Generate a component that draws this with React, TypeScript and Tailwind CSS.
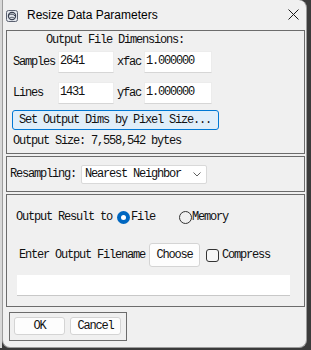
import React from "react";

const mono = "font-['Liberation_Mono',monospace] text-[12px] leading-[14px] tracking-[-1.2px] text-[#111111] whitespace-nowrap";

function Entry({ w, value }: { w: string; value?: string }) {
  return (
    <div className={`${w} h-[22px] bg-white border border-[#ececec] border-b-[#d6d6d6] pl-[1px] pt-[2px] ${mono}`}>
      {value}
    </div>
  );
}

export default function App() {
  return (
    <div className="w-[311px] h-[350px] bg-[#3b3b3b] flex overflow-hidden">
      <div className="w-[2px] h-[348px] bg-[#d8d8d8] shrink-0" />
      <div className="w-[305px] h-[348px] shrink-0 bg-[#f0f0f0] border border-t-0 border-[#9c9c9c] rounded-tr-[8px] rounded-b-[8px] flex flex-col">
        {/* title bar */}
        <div className="h-[30px] flex items-center shrink-0 relative">
          <svg className="ml-[3px] mt-[2px]" width="12" height="12" viewBox="0 0 12 12">
            <rect x="0.5" y="0.5" width="11" height="11" rx="2" fill="#e4e8ee" stroke="#5a6070" />
            <circle cx="6" cy="6" r="3.6" fill="none" stroke="#3a4150" strokeWidth="1.2" />
            <path d="M3 5 C5 3.5 7.5 4 9 6" fill="none" stroke="#3a4150" strokeWidth="1" />
            <path d="M3.5 8 C5 7 7 7 8.5 8" fill="none" stroke="#3a4150" strokeWidth="0.8" />
          </svg>
          <span className="ml-[9px] font-['Liberation_Sans',sans-serif] text-[12px] text-black">Resize Data Parameters</span>
          <svg className="absolute left-[285px] top-[9px]" width="11" height="11" viewBox="0 0 11 11">
            <path d="M0.5 0.5 L10.5 10.5 M10.5 0.5 L0.5 10.5" stroke="#1a1a1a" strokeWidth="1" />
          </svg>
        </div>

        {/* Frame 1 */}
        <div className="ml-[3px] w-[299px] h-[124px] border border-[#6c6c6c] flex flex-col shrink-0">
          <div className={`mt-[2px] pl-[39px] ${mono}`}>Output File Dimensions:</div>
          <div className="mt-[4px] h-[22px] pl-[6px] flex items-center">
            <div className={`w-[45px] ${mono}`}>Samples</div>
            <Entry w="w-[56px]" value="2641" />
            <div className={`ml-[3px] w-[27px] ${mono}`}>xfac</div>
            <Entry w="w-[68px]" value="1.000000" />
          </div>
          <div className="mt-[9px] h-[22px] pl-[6px] flex items-center">
            <div className={`w-[45px] ${mono}`}>Lines</div>
            <Entry w="w-[56px]" value="1431" />
            <div className={`ml-[3px] w-[27px] ${mono}`}>yfac</div>
            <Entry w="w-[68px]" value="1.000000" />
          </div>
          <div className={`mt-[6px] ml-[5px] w-[207px] h-[20px] bg-[#e0eef9] border border-[#0078d4] rounded-[3px] pl-[6px] flex items-center ${mono}`}>
            Set Output Dims by Pixel Size...
          </div>
          <div className={`mt-[4px] pl-[6px] ${mono}`}>Output Size: 7,558,542 bytes</div>
        </div>

        {/* Frame 2 */}
        <div className="mt-[2px] ml-[3px] w-[299px] h-[36px] border border-[#6c6c6c] flex items-center pl-[3px] shrink-0">
          <div className={`w-[71px] ${mono}`}>Resampling:</div>
          <div className={`w-[126px] h-[19px] bg-white border border-[#d9d9d9] rounded-[2px] pl-[3px] flex items-center ${mono}`}>
            <span className="flex-1">Nearest Neighbor</span>
            <svg className="mr-[5px]" width="8" height="5" viewBox="0 0 8 5">
              <path d="M0.5 0.5 L4 4 L7.5 0.5" fill="none" stroke="#606060" strokeWidth="1" />
            </svg>
          </div>
        </div>

        {/* Frame 3 */}
        <div className="mt-[2px] ml-[3px] w-[299px] h-[113px] border border-[#6c6c6c] flex flex-col shrink-0">
          <div className="mt-[15px] h-[14px] pl-[9px] flex items-center">
            <div className={`${mono}`}>Output Result to</div>
            <div className="ml-[5px] w-[13px] h-[13px] rounded-full bg-[#0067c0] flex items-center justify-center">
              <div className="w-[5px] h-[5px] rounded-full bg-white" />
            </div>
            <div className={`ml-[1px] ${mono}`}>File</div>
            <div className="ml-[24px] w-[13px] h-[13px] rounded-full border border-[#333333]" />
            <div className={`ml-[0px] ${mono}`}>Memory</div>
          </div>
          <div className="mt-[19px] h-[24px] pl-[12px] flex items-center">
            <div className={`${mono}`}>Enter Output Filename</div>
            <div className={`ml-[4px] w-[51px] h-[24px] bg-[#fdfdfd] border border-[#d4d4d4] rounded-[3px] flex items-center justify-center ${mono}`}>
              Choose
            </div>
            <div className="ml-[6px] w-[13px] h-[13px] rounded-[3px] border border-[#333333] bg-[#f6f6f6]" />
            <div className={`ml-[3px] ${mono}`}>Compress</div>
          </div>
          <div className="mt-[8px] ml-[10px] w-[273px] h-[21px] bg-white border-b border-[#c8c8c8]" />
        </div>

        {/* Frame 4 */}
        <div className="mt-[5px] ml-[6px] w-[118px] h-[29px] border border-[#6c6c6c] flex pl-[4px] pt-[4px] gap-[5px] shrink-0">
          <div className={`w-[51px] h-[18px] bg-[#fdfdfd] border border-[#d4d4d4] rounded-[3px] flex items-center justify-center ${mono}`}>OK</div>
          <div className={`w-[51px] h-[18px] bg-[#fdfdfd] border border-[#d4d4d4] rounded-[3px] flex items-center justify-center ${mono}`}>Cancel</div>
        </div>
      </div>
    </div>
  );
}
